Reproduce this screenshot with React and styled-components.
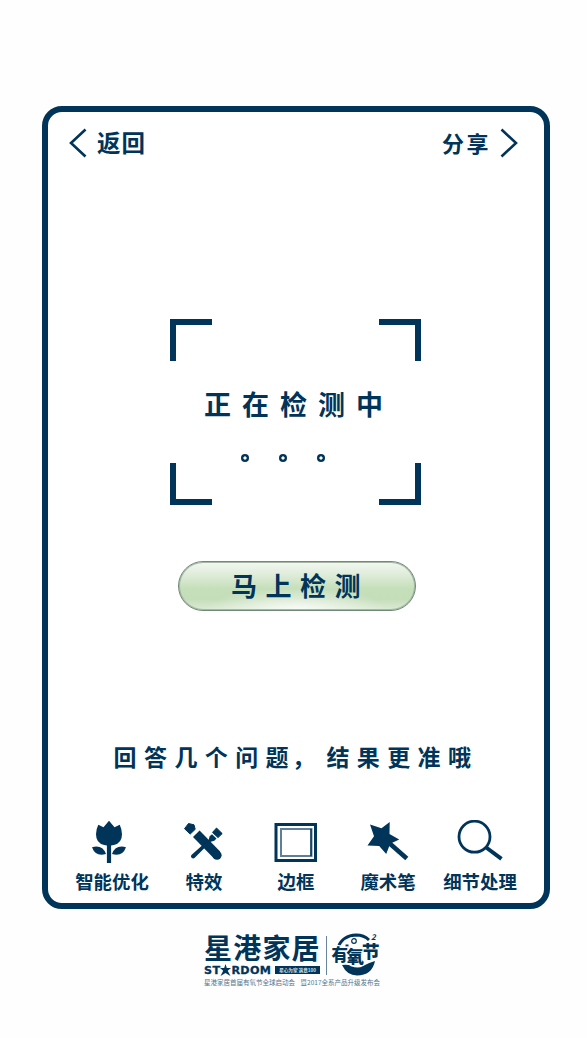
import React from "react";
import styled, { createGlobalStyle } from "styled-components";

const navy = "#003459";

const GlobalStyle = createGlobalStyle`
  * { box-sizing: border-box; }
  body {
    margin: 0;
    background: #fefefe;
    color: ${navy};
    font-family: "Noto Sans CJK SC", "Liberation Sans", sans-serif;
    font-weight: 700;
  }
`;

const Page = styled.main`
  width: 587px;
  height: 1038px;
  padding: 106px 37px 0 42px;
  overflow: hidden;
`;

const Frame = styled.section`
  display: flex;
  flex-direction: column;
  align-items: center;
  height: 803px;
  border: 6px solid ${navy};
  border-radius: 20px;
  background: #fff;
`;

const Header = styled.header`
  display: flex;
  justify-content: space-between;
  align-items: center;
  width: 100%;
  height: 62px;
  padding: 0 26px 0 21px;
`;

const NavButton = styled.button`
  display: flex;
  align-items: center;
  gap: ${(p) => p.$gap}px;
  padding: 0;
  border: 0;
  background: none;
  color: inherit;
  font: inherit;
  font-size: ${(p) => p.$size}px;
  line-height: 30px;
  letter-spacing: ${(p) => p.$tracking}px;
  svg { display: block; }
`;

const NavLabel = styled.span`
  padding-bottom: 2px;
`;

const Scanner = styled.div`
  display: grid;
  grid-template-columns: 42px 1fr 42px;
  grid-template-rows: 42px 1fr 42px;
  width: 251px;
  height: 186px;
  margin: 145px 2px 0 0;
`;

const Corner = styled.i`
  grid-column: ${(p) => (p.$right ? 3 : 1)};
  grid-row: ${(p) => (p.$bottom ? 3 : 1)};
  border: 0 solid ${navy};
  ${(p) => (p.$right ? "border-right-width" : "border-left-width")}: 6px;
  ${(p) => (p.$bottom ? "border-bottom-width" : "border-top-width")}: 6px;
`;

const Status = styled.div`
  grid-column: 1 / 4;
  grid-row: 2;
  display: flex;
  flex-direction: column;
  align-items: center;
  padding-top: 24px;
`;

const StatusText = styled.p`
  margin: 0;
  padding-left: 8px;
  font-size: 27px;
  line-height: 38px;
  letter-spacing: 11px;
  white-space: nowrap;
`;

const Dots = styled.div`
  display: flex;
  gap: 30px;
  margin-top: 31px;
  padding-right: 25px;
`;

const Dot = styled.i`
  width: 8px;
  height: 8px;
  border-radius: 50%;
  background: radial-gradient(circle, #fff 1.2px, ${navy} 2px);
`;

const DetectButton = styled.button`
  width: 238px;
  height: 50px;
  margin: 56px 0 0 2px;
  padding: 0 0 2px 6px;
  border: 1px solid #718978;
  border-radius: 25px;
  box-shadow: inset 0 0 0 1px #a5b8a4;
  background:
    radial-gradient(ellipse 90px 22px at 50% 100%, rgba(255, 255, 255, 0.85), rgba(255, 255, 255, 0) 100%),
    linear-gradient(#f3f7f1 0%, #e1eddc 24%, #c6dfbb 55%, #c5deba 78%, #dcebd5 100%);
  color: ${navy};
  font: inherit;
  font-size: 26px;
  line-height: 36px;
  letter-spacing: 8.5px;
  white-space: nowrap;
`;

const Hint = styled.p`
  margin: 127px 0 0;
  font-size: 23px;
  line-height: 36px;
  letter-spacing: 7.4px;
  white-space: nowrap;
`;

const Comma = styled.span`
  margin: 0 4px 0 -4px;
`;

const Toolbar = styled.nav`
  display: grid;
  grid-template-columns: repeat(5, 92px);
  margin-top: 46px;
`;

const Tool = styled.div`
  display: flex;
  flex-direction: column;
  align-items: center;
  svg { display: block; }
`;

const ToolLabel = styled.span`
  font-size: 18.4px;
  line-height: 34px;
  white-space: nowrap;
`;

const Footer = styled.footer`
  width: 176px;
  margin: 24px 0 0 162px;
`;

const Brands = styled.div`
  display: flex;
  height: 45px;
`;

const Brand = styled.div`
  width: 116px;
`;

const BrandName = styled.div`
  height: 31px;
  font-size: 28px;
  line-height: 29px;
  letter-spacing: 1.2px;
  white-space: nowrap;
`;

const BrandRow = styled.div`
  display: flex;
  align-items: center;
  gap: 2px;
  height: 12px;
`;

const Latin = styled.span`
  display: flex;
  align-items: center;
  width: 69px;
  font-family: "DejaVu Sans", sans-serif;
  font-size: 11.2px;
  line-height: 11px;
  letter-spacing: 0.35px;
  -webkit-text-stroke: 0.3px ${navy};
`;

const BrandTag = styled.span`
  width: 45px;
  height: 8px;
  background: ${navy};
  color: #d8e2e8;
  font-size: 4.6px;
  line-height: 8px;
  text-align: center;
  white-space: nowrap;
`;

const Divider = styled.i`
  width: 1px;
  height: 39px;
  margin: 3px 3px 0 6px;
  background: #6885a0;
`;

const Slogan = styled.p`
  display: flex;
  justify-content: space-between;
  margin: -1px 0 0;
  color: #55758e;
  font-size: 6.5px;
  line-height: 10px;
  font-weight: 400;
  white-space: nowrap;
`;

const Chevron = ({ flip }) => (
  <svg width="18" height="30" viewBox="0 0 18 30" fill="none" stroke={navy} strokeWidth="2.6">
    <path d={flip ? "M1.5 1.5 16 15 1.5 28.5" : "M16.5 1.5 2 15l14.5 13.5"} />
  </svg>
);

const Tulip = () => (
  <svg width="50" height="44" viewBox="0 0 50 44" fill={navy}>
    <path d="M11.300 4.800 16.500 7.300 22 .8l5.500 6.500 5.200-2.500q2.300 4.500 2.300 9.500 0 9-8.200 10.700l-2.700.5V43h-4.200V25.500l-2.700-.5Q9 23.300 9 14.300q0-5 2.300-9.500Z" />
    <path d="M5 27.200Q15.500 24.500 19 34 8.500 37 5 27.200ZM39 27.200Q28.500 24.500 25 34q10.500 3 14-6.800Z" />
  </svg>
);

const Brushes = () => (
  <svg width="44" height="44" viewBox="0 0 44 44" fill={navy}>
    <path d="m6.500 3.500 5.500 1.300 1.200 4.500-5 4.800L2.500 8.700Z" strokeLinejoin="round" stroke={navy} />
    <path d="M14.300 13.800 34.800 34.800" fill="none" stroke={navy} strokeWidth="9.200" />
    <circle cx="35" cy="35.200" r="4.600" />
    <path d="m34.500 8 5.700 5.600-4.200 4-5.500-5.200Z" stroke={navy} strokeLinejoin="round" />
    <path d="m27.600 16.200 2.400-2 4.500 4.300-2.200 2.300-3.500.9L12.500 38q-1.600 1-2.900-.3t-.2-2.800L26.800 19.500Z" />
  </svg>
);

const Border = () => (
  <svg width="44" height="44" viewBox="0 0 44 44" fill="none" stroke={navy}>
    <path d="M2 4.500h39.500v36H2Z" strokeWidth="3" />
    <path d="M7 9h30.500v27H7Z" strokeWidth="2" stroke="#5f7e97" />
    <path d="M37 9v27" strokeWidth="1.500" />
  </svg>
);

const Wand = () => (
  <svg width="44" height="44" viewBox="0 0 44 44" fill={navy}>
    <path d="m4 4.500 11.500 3.700L23.700 2l-.2 12 9.700 5.500-9 4.200L20.200 34l-7-8L1.500 25.500 8 16.300Z" />
    <path d="m22 22 18.800 16.500" fill="none" stroke={navy} strokeWidth="4.600" />
  </svg>
);

const Magnifier = () => (
  <svg width="48" height="44" viewBox="0 0 48 44" fill="none" stroke={navy}>
    <circle cx="18.500" cy="16.700" r="15.500" strokeWidth="2.800" />
    <path d="M29.500 27 45.500 38.800" strokeWidth="4" />
  </svg>
);

const Star = () => (
  <svg width="11" height="12" viewBox="0 0 11 12" fill={navy}>
    <path d="m5.500 0 1.300 4H11L7.700 6.700 10.500 12l-5-3-5 3 2.700-5.300L0 4h4.200Z" />
  </svg>
);

const FestivalLogo = () => (
  <svg width="50" height="46" viewBox="0 0 50 46" fill={navy} overflow="visible">
    <path d="M8 14Q13 2.500 26 2q8 0 13 5" fill="none" stroke={navy} strokeWidth="2.800" />
    <path d="M12 32q6-1 9 1 7 3 12 0 5-3 12-5-3 14.500-18 14.500-10 0-15-10.500Z" />
    <circle cx="24" cy="8" r="2.300" fill="none" stroke={navy} strokeWidth="1.200" />
    <path d="M15.500 12.500h3" stroke={navy} strokeWidth="2" />
    <g stroke="#fff" strokeWidth="2.400" paintOrder="stroke" fontWeight="900">
      <text x="1.500" y="27.500" fontSize="16.500">有</text>
      <text x="16.500" y="30" fontSize="17.500">氧</text>
      <text x="32" y="24.500" fontSize="17.500">节</text>
    </g>
    <text x="41" y="6.500" fontSize="8" fontStyle="italic">2</text>
  </svg>
);

const tools = [
  { label: "智能优化", Icon: Tulip, nudge: 0 },
  { label: "特效", Icon: Brushes },
  { label: "边框", Icon: Border },
  { label: "魔术笔", Icon: Wand },
  { label: "细节处理", Icon: Magnifier, labelNudge: 2 },
];

export default function App() {
  return (
    <Page>
      <GlobalStyle />
      <Frame>
        <Header>
          <NavButton $gap={10} $size={23.5} $tracking={1}><Chevron /><NavLabel>返回</NavLabel></NavButton>
          <NavButton $gap={9} $size={22} $tracking={2.5}><NavLabel>分享</NavLabel><Chevron flip /></NavButton>
        </Header>
        <Scanner>
          <Corner /><Corner $right />
          <Status>
            <StatusText>正在检测中</StatusText>
            <Dots><Dot /><Dot /><Dot /></Dots>
          </Status>
          <Corner $bottom /><Corner $right $bottom />
        </Scanner>
        <DetectButton>马上检测</DetectButton>
        <Hint>回答几个问题<Comma>，</Comma>结果更准哦</Hint>
        <Toolbar>
          {tools.map(({ label, Icon }) => (
            <Tool key={label}>
              <Icon />
              <ToolLabel>{label}</ToolLabel>
            </Tool>
          ))}
        </Toolbar>
      </Frame>
      <Footer>
        <Brands>
          <Brand>
            <BrandName>星港家居</BrandName>
            <BrandRow>
              <Latin>ST<Star />RDOM</Latin>
              <BrandTag>星心为家 满意100</BrandTag>
            </BrandRow>
          </Brand>
          <Divider />
          <FestivalLogo />
        </Brands>
        <Slogan><span>星港家居首届有氧节全球启动会</span><span>暨2017全系产品升级发布会</span></Slogan>
      </Footer>
    </Page>
  );
}
